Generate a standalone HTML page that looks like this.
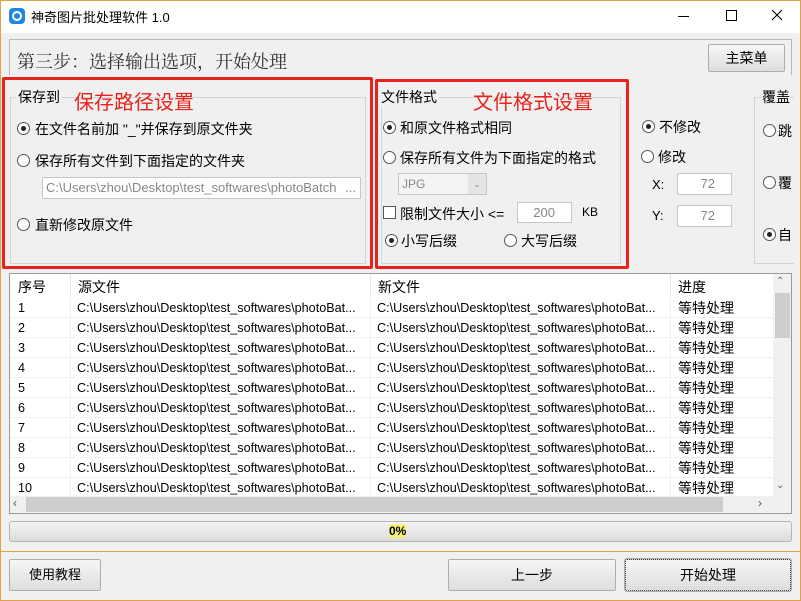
<!DOCTYPE html>
<html><head><meta charset="utf-8"><style>
*{margin:0;padding:0;box-sizing:border-box}
body{width:801px;height:601px;overflow:hidden;background:#f0f0f0;font-family:"Liberation Sans","Noto Sans CJK SC",sans-serif;font-size:14px;color:#000;position:relative}
.a{position:absolute;white-space:nowrap}
.win{position:absolute;left:0;top:0;width:801px;height:601px;border:1px solid #e3a047;pointer-events:none;z-index:20}
.title{position:absolute;left:0;top:0;width:801px;height:33px;background:#fff}
.btn{position:absolute;border:1px solid #adadad;background:linear-gradient(#f6f6f6,#dedede);border-radius:2px;text-align:center;font-size:14px}
.radio{position:absolute;width:13px;height:13px;border:1px solid #555;border-radius:50%;background:#fff}
.radio.on::after{content:"";position:absolute;left:3px;top:3px;width:5px;height:5px;border-radius:50%;background:#222}
.red{position:absolute;border:3px solid #e8231e;border-radius:2px}
.grp{position:absolute;border:1px solid #d5d5d5}
.inp{position:absolute;border:1px solid #c6c6c6;background:#fff;color:#888;font-size:13px}
.row{position:absolute;left:10px;width:763px;height:20px;border-bottom:1px solid #f0f0f0;font-size:12.6px;line-height:20px}
.row span{position:absolute}
</style></head><body>
<div class="title"></div>
<div class="a" style="left:9px;top:8px;width:16px;height:16px;border-radius:4px;background:#1e88e5"></div>
<div class="a" style="left:12px;top:11px;width:10px;height:10px;border-radius:50%;border:2px solid #fff"></div>
<div class="a" style="left:31px;top:7px;font-size:13px">神奇图片批处理软件 1.0</div>
<div class="a" style="left:678px;top:16px;width:11px;height:1px;background:#000"></div>
<div class="a" style="left:726px;top:10px;width:11px;height:11px;border:1px solid #000"></div>
<svg class="a" style="left:771px;top:9px" width="12" height="12"><path d="M1 1L11 11M11 1L1 11" stroke="#000" stroke-width="1.1"/></svg>

<div class="a" style="left:9px;top:39px;width:783px;height:36px;border:1px solid #b8b8b8;border-bottom:none"></div>
<div class="a" style="left:17px;top:48px;font-size:18px;font-family:'Noto Serif CJK SC','Liberation Serif',serif;color:#333">第三步：选择输出选项，开始处理</div>
<div class="btn" style="left:708px;top:44px;width:77px;height:28px;line-height:26px">主菜单</div>

<div class="grp" style="left:10px;top:97px;width:356px;height:167px"></div>
<div class="a" style="left:16px;top:87px;background:#f0f0f0;padding:0 2px">保存到</div>
<div class="a" style="left:74px;top:86px;color:#e8231e;font-size:20px">保存路径设置</div>
<div class="radio on" style="left:17px;top:122px"></div>
<div class="a" style="left:35px;top:119px">在文件名前加 "_"并保存到原文件夹</div>
<div class="radio" style="left:17px;top:154px"></div>
<div class="a" style="left:35px;top:151px">保存所有文件到下面指定的文件夹</div>
<div class="inp" style="left:42px;top:177px;width:319px;height:22px;line-height:20px;padding-left:3px">C:\Users\zhou\Desktop\test_softwares\photoBatch<span style="position:absolute;right:4px">...</span></div>
<div class="radio" style="left:17px;top:218px"></div>
<div class="a" style="left:35px;top:215px">直新修改原文件</div>
<div class="red" style="left:2px;top:77px;width:371px;height:192px"></div>

<div class="grp" style="left:381px;top:97px;width:240px;height:167px"></div>
<div class="a" style="left:381px;top:87px;background:#f0f0f0;padding-right:2px">文件格式</div>
<div class="a" style="left:473px;top:86px;color:#e8231e;font-size:20px">文件格式设置</div>
<div class="radio on" style="left:383px;top:121px"></div>
<div class="a" style="left:400px;top:118px">和原文件格式相同</div>
<div class="radio" style="left:383px;top:151px"></div>
<div class="a" style="left:400px;top:148px">保存所有文件为下面指定的格式</div>
<div class="inp" style="left:398px;top:173px;width:89px;height:22px;background:#f4f4f4;line-height:20px;padding-left:3px;font-size:12px">JPG<span style="position:absolute;right:0;top:0;width:18px;height:20px;background:#e4e4e4;text-align:center;font-size:9px">⌄</span></div>
<div class="a" style="left:383px;top:206px;width:13px;height:13px;border:1px solid #555;background:#fff"></div>
<div class="a" style="left:400px;top:204px">限制文件大小 &lt;=</div>
<div class="inp" style="left:517px;top:202px;width:55px;height:21px;text-align:right;padding-right:16px;line-height:19px">200</div>
<div class="a" style="left:582px;top:205px;font-size:12px">KB</div>
<div class="radio on" style="left:385px;top:234px"></div>
<div class="a" style="left:401px;top:231px">小写后缀</div>
<div class="radio" style="left:504px;top:234px"></div>
<div class="a" style="left:521px;top:231px">大写后缀</div>
<div class="red" style="left:375px;top:79px;width:254px;height:190px"></div>

<div class="radio on" style="left:642px;top:120px"></div>
<div class="a" style="left:659px;top:117px">不修改</div>
<div class="radio" style="left:641px;top:150px"></div>
<div class="a" style="left:658px;top:147px">修改</div>
<div class="a" style="left:652px;top:177px;font-size:13px">X:</div>
<div class="inp" style="left:677px;top:173px;width:55px;height:22px;text-align:right;padding-right:16px;line-height:20px">72</div>
<div class="a" style="left:652px;top:208px;font-size:13px">Y:</div>
<div class="inp" style="left:677px;top:205px;width:55px;height:22px;text-align:right;padding-right:16px;line-height:20px">72</div>
<div class="grp" style="left:754px;top:97px;width:40px;height:167px;border-right:none"></div>
<div class="a" style="left:762px;top:87px;background:#f0f0f0">覆盖</div>
<div class="radio" style="left:763px;top:124px"></div><div class="a" style="left:778px;top:121px">跳</div>
<div class="radio" style="left:763px;top:176px"></div><div class="a" style="left:778px;top:173px">覆</div>
<div class="radio on" style="left:763px;top:228px"></div><div class="a" style="left:778px;top:225px">自</div>

<div class="a" style="left:9px;top:273px;width:783px;height:241px;border:1px solid #9a9a9a;background:#fff"></div>
<div class="a" style="left:10px;top:274px;width:763px;height:23px;font-size:14px">
<span class="a" style="left:8px;top:3px">序号</span><span class="a" style="left:68px;top:3px">源文件</span><span class="a" style="left:368px;top:3px">新文件</span><span class="a" style="left:668px;top:3px">进度</span>
<div class="a" style="left:60px;top:0;width:1px;height:23px;background:#e5e5e5"></div><div class="a" style="left:360px;top:0;width:1px;height:23px;background:#e5e5e5"></div><div class="a" style="left:660px;top:0;width:1px;height:23px;background:#e5e5e5"></div></div>
<div id="rows"></div>
<div class="a" style="left:773px;top:274px;width:18px;height:222px;background:#f0f0f0"></div>
<div class="a" style="left:776px;top:276px;font-size:10px;color:#666">⌃</div>
<div class="a" style="left:775px;top:293px;width:15px;height:45px;background:#cdcdcd"></div>
<div class="a" style="left:776px;top:480px;font-size:10px;color:#666">⌄</div>
<div class="a" style="left:10px;top:496px;width:781px;height:17px;background:#f0f0f0"></div>
<div class="a" style="left:26px;top:497px;width:697px;height:15px;background:#cdcdcd"></div>
<div class="a" style="left:13px;top:496px;font-size:12px;color:#555">‹</div>
<div class="a" style="left:758px;top:496px;font-size:12px;color:#555">›</div>

<div class="a" style="left:9px;top:521px;width:783px;height:21px;border:1px solid #b5b5b5;border-radius:3px;background:linear-gradient(#f4f4f4,#dcdcdc)"></div>
<div class="a" style="left:389px;top:524px;font-size:12px;font-weight:bold;background:#f6f080">0%</div>
<div class="a" style="left:0;top:551px;width:801px;height:1px;background:#e3a047"></div>
<div class="btn" style="left:9px;top:559px;width:92px;height:32px;line-height:30px;font-size:13px">使用教程</div>
<div class="btn" style="left:448px;top:559px;width:168px;height:32px;line-height:30px">上一步</div>
<div class="btn" style="left:625px;top:559px;width:166px;height:32px;line-height:30px;border:1px dotted #333;outline:1px solid #adadad">开始处理</div>
<div class="win"></div>
<script>
var h='';for(var i=1;i<=10;i++){var y=298+(i-1)*20;var p='C:\\Users\\zhou\\Desktop\\test_softwares\\photoBat...';
h+='<div class="row" style="top:'+y+'px"><span style="left:8px">'+i+'</span><span style="left:67px">'+p+'</span><span style="left:367px">'+p+'</span><span style="left:668px;font-size:14px">等特处理</span><div class="a" style="left:60px;top:0;width:1px;height:20px;background:#f0f0f0"></div><div class="a" style="left:360px;top:0;width:1px;height:20px;background:#f0f0f0"></div><div class="a" style="left:660px;top:0;width:1px;height:20px;background:#f0f0f0"></div></div>';}
document.getElementById('rows').innerHTML=h;
</script>
</body></html>
